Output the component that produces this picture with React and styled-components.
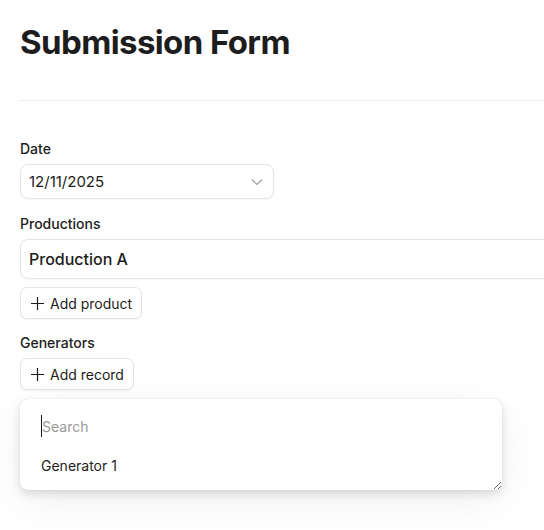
import React from "react";
import styled, { createGlobalStyle } from "styled-components";

const Global = createGlobalStyle`
  html, body { margin: 0; padding: 0; background: #fff; }
  body { font-family: Inter, "Helvetica Neue", Arial, sans-serif; color: #1d1d1f; overflow: hidden; }
  * { box-sizing: border-box; }
`;

const Page = styled.div`
  width: 544px;
  min-height: 530px;
  overflow: hidden;
  padding: 20px 0 0 20px;
`;

const Title = styled.h1`
  margin: 0;
  padding-top: 2px;
  font-size: 33px;
  font-weight: 700;
  letter-spacing: -0.6px;
  line-height: 40px;
  color: #1d1d20;
`;

const Divider = styled.hr`
  border: 0;
  border-top: 1px solid #ececec;
  margin: 38px 0 0 0;
`;

const Form = styled.div`
  display: flex;
  flex-direction: column;
  align-items: flex-start;
  padding-top: 38px;
`;

const Label = styled.div`
  font-size: 14px;
  font-weight: 500;
  line-height: 20px;
  color: #1d1d20;
  margin-bottom: 5px;
  margin-top: ${(p) => p.$top || 0}px;
`;

const Select = styled.div`
  width: 254px;
  height: 35px;
  border: 1px solid #e4e4e4;
  border-radius: 8px;
  display: flex;
  align-items: center;
  justify-content: space-between;
  padding: 0 10px 0 8px;
  font-size: 15px;
  color: #1d1d20;
  box-shadow: 0 1px 2px rgba(0,0,0,0.04);
`;

const Input = styled.div`
  width: 560px;
  height: 40px;
  flex-shrink: 0;
  border: 1px solid #e4e4e4;
  border-radius: 8px;
  display: flex;
  align-items: center;
  padding: 0 8px;
  font-size: 16px;
  font-weight: 500;
  color: #1d1d20;
  box-shadow: 0 1px 2px rgba(0,0,0,0.04);
`;

const Button = styled.button`
  margin-top: ${(p) => p.$top || 0}px;
  height: 32px;
  border: 1px solid #e4e4e4;
  border-radius: 7px;
  background: #fff;
  display: inline-flex;
  align-items: center;
  gap: 5px;
  padding: 0 9px 0 9px;
  font-family: inherit;
  font-size: 14px;
  color: #1d1d20;
  box-shadow: 0 1px 2px rgba(0,0,0,0.05);
`;

const Popup = styled.div`
  margin-top: 9px;
  width: 482px;
  height: 91px;
  border-radius: 8px;
  background: #fff;
  box-shadow: 0 0 1px rgba(0,0,0,0.2), 0 4px 10px rgba(0,0,0,0.12), 0 12px 40px rgba(0,0,0,0.06);
  resize: both;
  overflow: auto;
  padding: 16px 21px 0 21px;
`;

const Search = styled.div`
  height: 22px;
  display: flex;
  align-items: center;
  font-size: 14px;
  color: #9a9a9a;
  border-left: 1px solid #1d1d20;
  padding-left: 0;
`;

const Item = styled.div`
  margin-top: 20px;
  font-size: 14px;
  color: #1d1d20;
`;

const Plus = () => (
  <svg width="15" height="15" viewBox="0 0 15 15" fill="none" stroke="#1d1d20" strokeWidth="1.2">
    <path d="M7.5 1v13M1 7.5h13" />
  </svg>
);

const Chevron = () => (
  <svg width="12" height="8" viewBox="0 0 12 8" fill="none" stroke="#9a9a9a" strokeWidth="1.1">
    <path d="M1 1.5l5 5 5-5" />
  </svg>
);

export default function App() {
  return (
    <Page>
      <Global />
      <Title>Submission Form</Title>
      <Divider />
      <Form>
        <Label>Date</Label>
        <Select>
          <span>12/11/2025</span>
          <Chevron />
        </Select>
        <Label $top={15}>Productions</Label>
        <Input>Production A</Input>
        <Button $top={8}>
          <Plus /> Add product
        </Button>
        <Label $top={14}>Generators</Label>
        <Button>
          <Plus /> Add record
        </Button>
        <Popup>
          <Search>Search</Search>
          <Item>Generator 1</Item>
        </Popup>
      </Form>
    </Page>
  );
}
